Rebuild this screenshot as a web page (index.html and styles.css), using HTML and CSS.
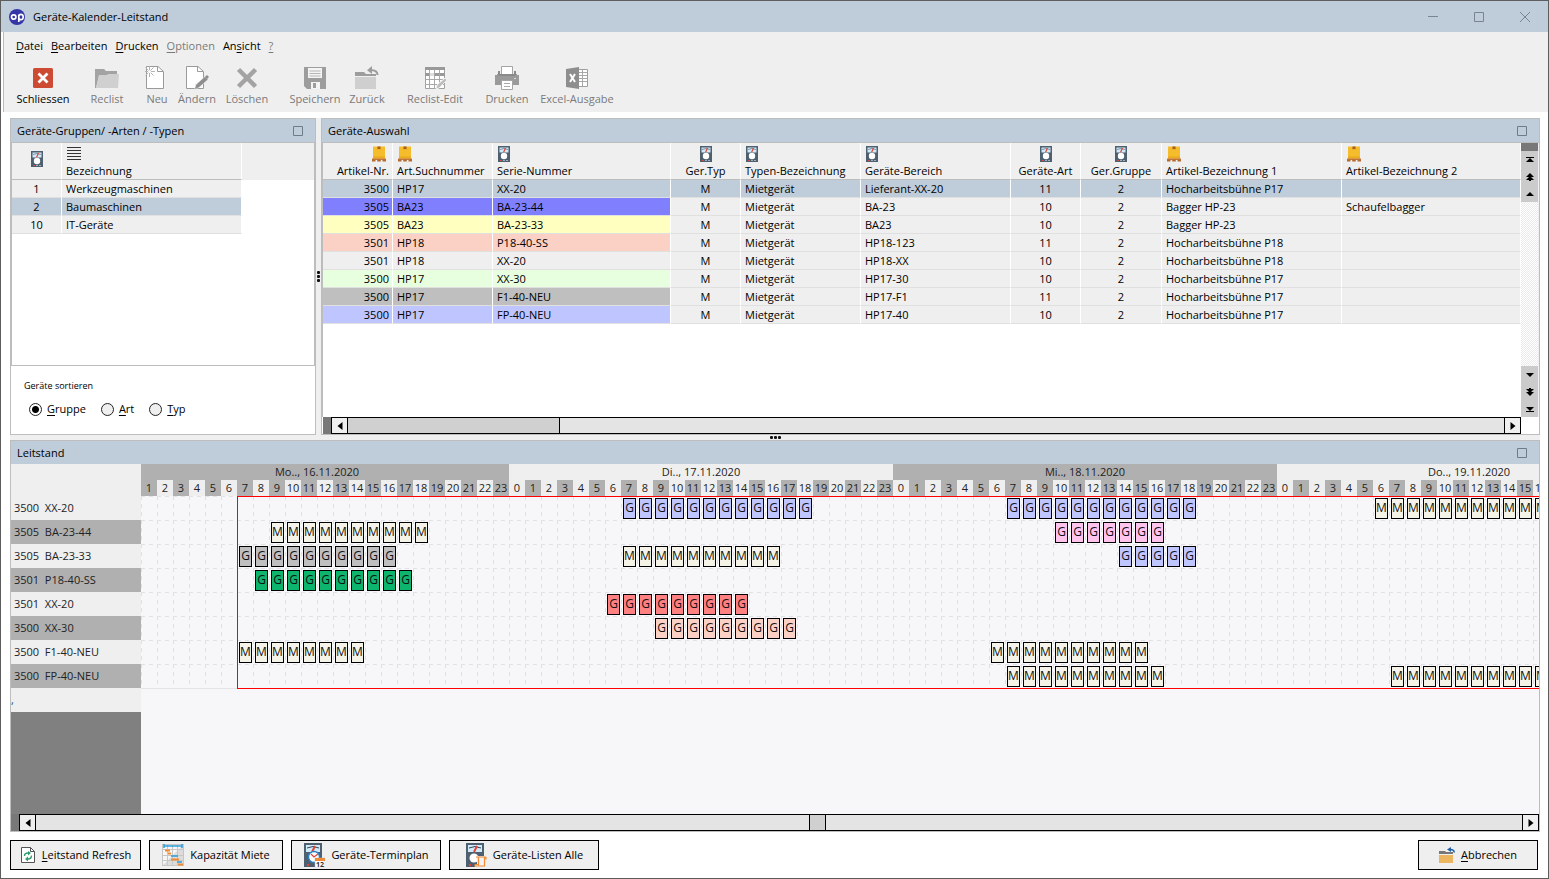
FILE: index.html
```html
<!DOCTYPE html>
<html lang="de">
<head>
<meta charset="utf-8">
<title>Geräte-Kalender-Leitstand</title>
<link rel="stylesheet" href="styles.css">
</head>
<body>
<svg class="defs" aria-hidden="true">
  <symbol id="meter" viewBox="0 0 12 16">
    <path fill="#4e5f70" d="M0 0h12v16H0z"/>
    <path fill="#cfeaf8" d="M1.500 1.500h9v5h-9z"/>
    <path fill="none" stroke="#2b3a49" stroke-width=".5" d="M2 3.500Q6 1.500 10 3.500"/>
    <path stroke="#e04436" stroke-width="1.200" d="M5.500 6.500 7.500 2"/>
    <circle cx="6" cy="10" r="3.200" fill="#fff"/>
    <path fill="#e04436" d="M2 14h2v1H2z"/><path fill="#9fb0be" d="M5 14h2v1H5zM8 14h2v1H8z"/>
  </symbol>
  <symbol id="box" viewBox="0 0 14 15">
    <path fill="#f5bc2c" d="M1 0h12v12H1z"/><path fill="#e9aa1c" d="M1 10h12v2H1z"/>
    <path fill="#a85a1c" d="M5.500 0h3v3l-1.500-.8L5.500 3z"/>
    <path fill="#c97b3a" d="M0 12h14v1.500H0z"/><path fill="#b56a30" d="M0 13h3.500v2H0zM5.200 13h3.600v2H5.200zM10.500 13H14v2h-3.500z"/>
  </symbol>
  <symbol id="max" viewBox="0 0 10 10"><path fill="none" stroke="#6f7c88" d="M.5.5h9v9h-9z"/></symbol>
</svg>

<div class="window">
  <header class="titlebar">
    <svg class="logo" viewBox="0 0 16 16"><circle cx="8" cy="8" r="8" fill="#3535a8"/><circle cx="4.700" cy="8" r="2.200" fill="none" stroke="#fff" stroke-width="1.700"/><path fill="none" stroke="#fff" stroke-width="1.700" d="M9.800 13V5.500M9.800 8a2.200 2.200 0 1 0 4.300 0 2.200 2.200 0 1 0-4.300 0"/></svg>
    <h1>Geräte-Kalender-Leitstand</h1>
    <div class="caption">
      <button aria-label="Minimieren"><svg viewBox="0 0 12 12"><path d="M1 5.500h10"/></svg></button>
      <button aria-label="Maximieren"><svg viewBox="0 0 12 12"><path d="M1.500 1.500h9v9h-9z"/></svg></button>
      <button aria-label="Fenster schliessen"><svg viewBox="0 0 12 12"><path d="m1 1 10 10M11 1 1 11"/></svg></button>
    </div>
  </header>

  <div class="chrome">
    <nav class="menu">
      <button><u>D</u>atei</button><button><u>B</u>earbeiten</button><button><u>D</u>rucken</button><button disabled><u>O</u>ptionen</button><button>An<u>s</u>icht</button><button disabled><u>?</u></button>
    </nav>
    <div class="toolbar">
      <button class="w64"><svg viewBox="0 0 24 24"><rect x="2" y="2" width="20" height="20" rx="1.500" fill="#ce4b33"/><path stroke="#fff" stroke-width="2.800" d="m7.500 7.500 9 9m0-9-9 9"/></svg>Schliessen</button>
      <button class="w64" disabled><svg viewBox="0 0 24 24"><path fill="#a3a3a3" d="M0 3h9l2 2h11v5H4L1 22H0z"/><path fill="#d0d0d0" d="M4 9h8l1-1h11l-1 14H1z"/></svg>Reclist</button>
      <button class="w36" disabled><svg viewBox="3 0 24 24"><path fill="#fff" stroke="#9a9a9a" d="M4.500.5H16l5.500 5v17h-17z"/><path fill="none" stroke="#9a9a9a" d="M15.500.5v5h5.500"/><path stroke="#b3b3b3" d="M7.500 0v11M3 5.500h10M3.500 1.500l8 8m0-8-8 8"/><circle cx="7.500" cy="5.500" r="1.500" fill="#fff"/></svg>Neu</button>
      <button class="w44" disabled><svg viewBox="0 0 24 24"><path fill="#fff" stroke="#9a9a9a" d="M1.500.5H13l5.500 5v17h-17z"/><path fill="none" stroke="#9a9a9a" d="M12.500.5v5h5.500"/><path fill="#8e8e8e" stroke="#efefef" stroke-width=".5" d="m9.500 23.500 1.500-5 9-8 3 3-9 8z"/><path stroke="#8e8e8e" stroke-width="3" d="m21 12 2-2"/></svg>Ändern</button>
      <button class="w56" disabled><svg viewBox="0 0 24 24"><path stroke="#a3a3a3" stroke-width="4.500" d="m3.500 3.500 17 17m0-17-17 17"/></svg>Löschen</button>
      <button class="w60 gap10" disabled><svg viewBox="0 0 24 24"><path fill="#9d9d9d" d="M1 1h22v22H4l-3-3z"/><path fill="#f4f4f4" d="M5 2h14v10H5zM8 16h9v7H8z"/><path stroke="#b5b5b5" d="M6.500 5h11M6.500 7.500h11M6.500 10h11"/><path fill="#9d9d9d" d="M10 17h3v5h-3z"/></svg>Speichern</button>
      <button class="w44" disabled><svg viewBox="0 0 24 24"><path fill="#cfcfcf" d="M0 11h21v12H0z"/><path fill="#9d9d9d" d="M0 10V6h9l2 2h10v2z"/><path fill="none" stroke="#9d9d9d" stroke-width="2" d="M22.500 9q0-5-7-5"/><path fill="#9d9d9d" d="M12 4.200 17 0v8z"/></svg>Zurück</button>
      <button class="w68 gap12" disabled><svg viewBox="0 0 24 24"><path fill="#fff" stroke="#a0a0a0" d="M2.500 1.500h19v21h-19z"/><path fill="#999" d="M2 1h20v3H2zM2 7h20v3H2z"/><path fill="#ddd" d="M6 7h5v3H6z"/><path stroke="#a8a8a8" d="M6.500 4v19M11.500 4v19M16.500 4v19M2 13.500h20M2 18.500h20"/><path fill="#bdbdbd" stroke="#efefef" d="m13 23 1-4 8-7 2 2-8 8z"/></svg>Reclist-Edit</button>
      <button class="w48 gap14" disabled><svg viewBox="0 0 24 24"><path fill="#9a9a9a" d="M0 8h24v11H0z"/><path fill="#efefef" d="M0 7h2v2H0zM22 7h2v2h-2z"/><path fill="#fff" stroke="#a5a5a5" d="M6.500.5h11v8h-11z"/><path fill="#8a8a8a" d="M3 5h2v4H3zM19 5h2v4h-2zM4 8h16v2H4z"/><path fill="#fff" stroke="#a5a5a5" d="M6.500 14.500h11v9h-11z"/><path stroke="#aaa" d="M9 17.500h6M9 20.500h6"/><path fill="#ddd" d="M19 12h2v1h-2z"/></svg>Drucken</button>
      <button class="w84 gap4" disabled><svg viewBox="0 0 24 24"><path fill="#fff" stroke="#a0a0a0" d="M13 3.500h9.500v17H13z"/><path stroke="#a8a8a8" d="M13 6.500h9M13 9.500h9M13 12.500h9M13 15.500h9M17.500 4v16"/><path fill="#8e8e8e" d="m1 3 13-2v22L1 21z"/><path stroke="#fff" stroke-width="2" d="m5 8 5 8m0-8-5 8"/></svg>Excel-Ausgabe</button>
    </div>
  </div>

  <main class="workspace">
    <div class="top">
      <section class="panel groups">
        <h2>Geräte-Gruppen/ -Arten / -Typen<button aria-label="Gruppen maximieren"><svg><use href="#max"/></svg></button></h2>
        <div class="groups-list">
          <table class="grid">
            <colgroup><col class="c50"><col class="c180"><col></colgroup>
            <thead><tr><th class="mid solo"><svg class="meter"><use href="#meter"/></svg></th><th><svg class="lines" viewBox="0 0 14 16"><path stroke="#333" d="M0 1.500h14M0 4.500h14M0 7.500h14M0 10.500h14M0 13.500h14"/></svg>Bezeichnung</th><th class="rest"></th></tr></thead>
            <tbody>
              <tr><td class="mid">1</td><td>Werkzeugmaschinen</td></tr>
              <tr class="sel"><td class="mid">2</td><td>Baumaschinen</td></tr>
              <tr><td class="mid">10</td><td>IT-Geräte</td></tr>
            </tbody>
          </table>
        </div>
        <fieldset class="sort">
          <legend>Geräte sortieren</legend>
          <div class="options">
            <label><input type="radio" name="sort" checked><span><u>G</u>ruppe</span></label>
            <label><input type="radio" name="sort"><span><u>A</u>rt</span></label>
            <label><input type="radio" name="sort"><span><u>T</u>yp</span></label>
          </div>
        </fieldset>
      </section>

      <div class="splitter vertical"><i></i><i></i><i></i></div>

      <section class="panel devices">
        <h2>Geräte-Auswahl<button aria-label="Auswahl maximieren"><svg><use href="#max"/></svg></button></h2>
        <div class="devices-body">
          <div class="devices-list">
            <table class="grid">
              <colgroup><col class="c70"><col class="c100"><col class="c178"><col class="c70"><col class="c120"><col class="c150"><col class="c70"><col class="c81"><col class="c180"><col></colgroup>
              <thead><tr>
                <th class="num"><svg class="box"><use href="#box"/></svg>Artikel-Nr.</th>
                <th><svg class="box"><use href="#box"/></svg>Art.Suchnummer</th>
                <th><svg class="meter"><use href="#meter"/></svg>Serie-Nummer</th>
                <th class="mid"><svg class="meter"><use href="#meter"/></svg>Ger.Typ</th>
                <th><svg class="meter"><use href="#meter"/></svg>Typen-Bezeichnung</th>
                <th><svg class="meter"><use href="#meter"/></svg>Geräte-Bereich</th>
                <th class="mid"><svg class="meter"><use href="#meter"/></svg>Geräte-Art</th>
                <th class="mid"><svg class="meter"><use href="#meter"/></svg>Ger.Gruppe</th>
                <th><svg class="box"><use href="#box"/></svg>Artikel-Bezeichnung 1</th>
                <th><svg class="box"><use href="#box"/></svg>Artikel-Bezeichnung 2</th>
              </tr></thead>
              <tbody id="devices"></tbody>
            </table>
          </div>
          <div class="vscroll">
            <div class="vgroup">
              <button aria-label="Anfang"><svg viewBox="0 0 8 8"><path d="M0 1h8v1H0zM4 2l4 4H0z"/></svg></button>
              <button aria-label="Seite hoch"><svg viewBox="0 0 8 8"><path d="m4 0 4 4H0zM4 3l4 4H0zM3 7h2v1H3z"/></svg></button>
              <button aria-label="Hoch"><svg viewBox="0 0 8 8"><path d="m4 2 4 4H0z"/></svg></button>
            </div>
            <div class="vtrack"></div>
            <div class="vgroup down">
              <button aria-label="Runter"><svg viewBox="0 0 8 8"><path d="m4 6 4-4H0z"/></svg></button>
              <button aria-label="Seite runter"><svg viewBox="0 0 8 8"><path d="m4 8 4-4H0zM4 5l4-4H0zM3 0h2v1H3z"/></svg></button>
              <button aria-label="Ende"><svg viewBox="0 0 8 8"><path d="M0 6h8v1H0zM4 6l4-4H0z"/></svg></button>
            </div>
          </div>
        </div>
        <div class="hscroll devices-scroll">
          <button aria-label="Links"><svg viewBox="0 0 5 8"><path d="M5 0v8L0 4z"/></svg></button>
          <div class="htrack"><div class="thumb long"></div></div>
          <button aria-label="Rechts"><svg viewBox="0 0 5 8"><path d="M0 0v8l5-4z"/></svg></button>
        </div>
      </section>
    </div>

    <div class="splitter horizontal"><i></i><i></i><i></i></div>

    <section class="panel plan">
      <h2>Leitstand<button aria-label="Leitstand maximieren"><svg><use href="#max"/></svg></button></h2>
      <div class="plan-body">
        <div class="names" id="names"></div>
        <div class="timeline">
          <div class="days" id="days"></div>
          <div class="hours" id="hours"></div>
          <div class="rows" id="rows"><div class="range"></div></div>
        </div>
      </div>
      <div class="hscroll">
        <button aria-label="Früher"><svg viewBox="0 0 5 8"><path d="M5 0v8L0 4z"/></svg></button>
        <div class="htrack"><div class="thumb short"></div></div>
        <button aria-label="Später"><svg viewBox="0 0 5 8"><path d="M0 0v8l5-4z"/></svg></button>
      </div>
    </section>
  </main>

  <footer class="actions">
    <button class="b131"><svg class="i16" viewBox="0 0 14 16"><path fill="#fff" stroke="#555" d="M.5.5h9l4 4v11H.5z"/><path fill="none" stroke="#555" d="M9.500.5v4h4"/><path fill="none" stroke="#2f9e6e" stroke-width="1.400" d="M3.500 9q0-3 3.500-3M10.500 8.500q0 3.500-3.500 3.500"/><path fill="#2f9e6e" d="M7 4l3 2-3 2.500zM7 9.500 4 12l3 2.500z"/></svg><span><u>L</u>eitstand Refresh</span></button>
    <button class="b134"><svg class="i22" viewBox="0 0 22 22"><path fill="#f6f6f6" d="M0 0h22v22H0z"/><path fill="#dcdcdc" d="M22 0v22H0z"/><path stroke="#c6c6c6" d="M.5 0v22M5.500 0v22M10.500 0v22M15.500 0v22M21.500 0v22M0 .5h22M0 5.500h22M0 11.500h22M0 16.500h22M0 21.500h22"/><path stroke="#2b9fd8" stroke-width="1.500" d="M2 2h18M2 0v4M20 0v4M9 12h7M15 18h5"/><path stroke="#f08a35" stroke-width="2" d="M3 6.500h5M6 9.500h3M9 15.500h8M16 20.500h5"/></svg>Kapazität Miete</button>
    <button class="b150"><svg class="i22 tall" viewBox="0 0 22 25"><path fill="#4e5f70" d="M1 0h18v24H1z"/><path fill="#cfeaf8" d="M3 2h14v7H3z"/><path fill="none" stroke="#345" d="M4 5q6-3 12 0"/><path stroke="#e04436" stroke-width="2" d="m9 9 3-6"/><circle cx="11" cy="14" r="5.500" fill="#fff" stroke="#2b7fc4" stroke-width="1.400"/><path fill="none" stroke="#e04436" stroke-width="1.200" d="m8 11 3 3 4-3"/><path fill="#fff" stroke="#bbb" stroke-width=".5" d="M12 15h10v10H12z"/><path fill="#f08a35" d="M12 15h10v3H12z"/><path fill="#e04436" d="M4 21h2v2H4z"/><text x="13" y="24" font-size="7" font-weight="700" fill="#333">12</text></svg>Geräte-Terminplan</button>
    <button class="b150"><svg class="i22 tall" viewBox="0 0 22 25"><path fill="#4e5f70" d="M1 0h18v24H1z"/><path fill="#cfeaf8" d="M3 2h14v7H3z"/><path fill="none" stroke="#345" d="M4 5q6-3 12 0"/><path stroke="#e04436" stroke-width="2" d="m9 9 3-6"/><circle cx="9" cy="15" r="4.500" fill="#fff"/><path fill="#e04436" d="M4 21h2v2H4z"/><path fill="#efefef" d="M12 13h10v12H10v-3h2z"/><path fill="#f3f3f3" stroke="#f08a35" stroke-width="1.200" d="M13.500 14h6v9h-6zM11 14h10M19.500 16H21v-2M10 21.500V23h9.500M10 21.500h3.500"/></svg>Geräte-Listen Alle</button>
    <button class="b120"><svg class="i16" viewBox="0 0 16 16"><path fill="#ecb560" d="M0 8h14v8H0z"/><path fill="#777" d="M0 7V4h6l1 1h7v2z"/><path fill="none" stroke="#1d5fa8" stroke-width="1.500" d="M15.200 5.500q0-3-4-3"/><path fill="#1d5fa8" d="m8 2.500 4-2.500v5z"/></svg><span><u>A</u>bbrechen</span></button>
  </footer>
</div>
<script src="app.js"></script>
</body>
</html>
```
FILE: styles.css
```css
* { box-sizing: border-box; }
body { margin: 0; background: #fff; color: #000; font: 11px/16px "Open Sans", "Noto Sans", sans-serif; }
button { font: inherit; color: inherit; background: none; border: 0; padding: 0; white-space: nowrap; }
h1, h2 { margin: 0; font-size: 11px; font-weight: 400; }
svg { display: block; fill: none; }
u { text-underline-offset: 2px; }
.defs { position: absolute; width: 0; height: 0; }

.window { display: flex; flex-direction: column; height: 100vh; min-height: 640px; border: 1px solid #5d5d5d; overflow: hidden; }
.titlebar { display: flex; align-items: center; flex: none; height: 31px; padding: 0 0 0 8px; background: #bfccda; }
.logo { width: 16px; height: 16px; margin-right: 8px; }
.caption { display: flex; margin-left: auto; }
.caption button { width: 46px; height: 30px; display: grid; place-items: center; }
.caption svg { width: 12px; height: 12px; stroke: #7b858f; }

.chrome { flex: none; background: #efefef; height: 80px; margin-left: 2px; padding: 6px 7px 0; border-left: 1px solid #bbb; }
.menu { display: flex; gap: 8px; padding-left: 5px; }
.menu button { height: 16px; }
button:disabled { color: #7a7a7a; }
.toolbar { display: flex; padding-top: 12px; }
.toolbar button { display: flex; flex-direction: column; align-items: center; gap: 1px; flex: none; }
.toolbar svg { width: 24px; height: 24px; }
.w36 { width: 36px; } .w44 { width: 44px; } .w48 { width: 48px; } .w56 { width: 56px; } .w60 { width: 60px; }
.w64 { width: 64px; } .w68 { width: 68px; } .w84 { width: 84px; }
.gap4 { margin-left: 4px; } .gap10 { margin-left: 10px; } .gap12 { margin-left: 12px; } .gap14 { margin-left: 14px; }

.workspace { flex: 1; min-height: 0; display: flex; flex-direction: column; margin: 6px 8px 0 9px; background: #efefef; }
.top { flex: 317 1 0; min-height: 0; display: grid; grid-template-columns: 306px 5px minmax(0, 1fr); }
.panel { display: flex; flex-direction: column; min-width: 0; min-height: 0; border: 1px solid #bdbdbd; background: #fff; }
.panel h2 { display: flex; align-items: center; flex: none; height: 23px; padding: 0 12px 0 6px; background: #bfccda; }
.panel h2 button { margin-left: auto; }
.panel h2 svg { width: 10px; height: 10px; }
.plan { flex: 390 1 0; }
.splitter { display: flex; align-items: center; justify-content: center; gap: 1px; }
.splitter i { width: 3px; height: 3px; border-radius: 1px; background: #111; }
.vertical { flex-direction: column; }
.horizontal { flex: none; height: 5px; }

.groups-list { flex: 1; min-height: 0; overflow: hidden; border: 1px solid #bdbdbd; }
.grid { width: 100%; table-layout: fixed; border-collapse: separate; border-spacing: 0; }
.grid th { height: 37px; padding: 3px 4px 0; background: #efefef; border-right: 1px solid #fff; border-bottom: 1px solid #bdbdbd; font-weight: 400; text-align: left; vertical-align: top; white-space: nowrap; }
.grid th svg { margin: 0 0 1px 1px; }
.grid th.mid, .grid td.mid { text-align: center; }
.grid th.mid svg { margin-left: auto; margin-right: auto; }
.grid th.num, .grid td.num { text-align: right; padding-right: 3px; }
.grid th.num svg { margin-left: auto; margin-right: 3px; }
.grid th.solo { padding-top: 8px; }
.grid th.rest { border: 0; }
.grid td { height: 18px; padding: 0 4px; background: #efefef; border-right: 1px solid #fff; border-bottom: 1px solid #e0e0e0; line-height: 16px; white-space: nowrap; }
.grid .sel td { background: #bfccda; }
.meter { width: 12px; height: 16px; }
.box { width: 14px; height: 16px; }
.lines { width: 14px; height: 16px; }
.c50 { width: 50px; } .c70 { width: 70px; } .c81 { width: 81px; } .c100 { width: 100px; } .c120 { width: 120px; }
.c150 { width: 150px; } .c178 { width: 178px; } .c180 { width: 180px; }
.grid .violet { background: #8080ff; } .grid .yellow { background: #ffffc0; } .grid .salmon { background: #fbd1c6; }
.grid .green { background: #e8ffdf; } .grid .grey { background: #bfbfbf; } .grid .blue { background: #bfc6ff; }

.sort { flex: none; height: 68px; margin: 0; padding: 0 13px; border: 0; }
.sort legend { padding: 12px 0 0; font-size: 9px; }
.options { display: flex; gap: 15px; padding: 7px 0 0 5px; }
.options label { display: flex; align-items: center; gap: 5px; height: 16px; }
.options input { appearance: none; width: 13px; height: 13px; margin: 0; border: 1px solid #222; border-radius: 50%; background: #efefef; }
.options input:checked { background: radial-gradient(circle, #000 0 3px, #fff 4px); }

.devices-body { flex: 1; min-height: 0; display: flex; border: solid #bdbdbd; border-width: 1px 0 0 1px; }
.devices-list { flex: 1; min-width: 0; overflow: hidden; }
.vscroll { display: flex; flex-direction: column; width: 18px; border-right: 1px solid #efefef; }
.vgroup { display: flex; flex-direction: column; justify-content: space-around; height: 59px; flex: none; background: #cbcbcb; border-top: 8px solid #787878; }
.vgroup.down { height: 51px; border: 0; }
.vgroup button { display: grid; place-items: center; }
.vgroup svg, .hscroll svg { width: 8px; height: 8px; fill: #000; }
.vtrack { flex: 1; background: repeating-conic-gradient(#fff 0 25%, #eaeaea 0 50%) 0 0 / 2px 2px; }

.hscroll { display: flex; flex: none; height: 17px; padding-left: 8px; background: #787878; }
.hscroll button { width: 17px; border: 1px solid #000; background: #efefef; display: grid; place-items: center; }
.devices-scroll { margin: 0 18px 0 1px; }
.htrack { flex: 1; background: #e4e4e4; border: solid #000; border-width: 1px 0; }
.thumb { height: 100%; background: #d0d0d0; border-right: 1px solid #000; }
.long { width: 212px; }
.short { width: 17px; margin-left: 52%; border-left: 1px solid #000; }

.plan-body { flex: 1; min-height: 0; display: flex; background: #f7f7f9; overflow: hidden; }
.names { width: 130px; flex: none; padding-top: 32px; background: linear-gradient(#efefef 32px, #808080 32px); color: #222; }
.names div { height: 24px; padding: 0 3px; line-height: 24px; background: #efefef; white-space: pre; }
.names div:nth-child(even) { background: #b0b0b0; }
.names .marker { padding: 0; color: #14507e; }
.timeline { flex: 1; min-width: 0; overflow: hidden; }
.days, .hours, .rows { width: 1520px; color: #222; }
.days { display: grid; grid-template-columns: 368px repeat(3, 384px); background: #efefef; text-align: center; }
.days div { height: 16px; }
.days div:first-child { padding-right: 16px; }
.days div:nth-child(odd) { background: #b0b0b0; }
.hours, .row { display: grid; grid-template-columns: repeat(95, 16px); }
.hours div { height: 16px; display: flex; justify-content: center; background: #efefef; }
.hours .dark { background: #b0b0b0; }
.rows { position: relative; border-bottom: 1px solid #e4e4e6; }
.row { height: 24px; padding-top: 2px; background:
  repeating-linear-gradient(90deg, transparent 0 4px, #f7f7f9 4px 8px) 0 0 / 100% 1px no-repeat,
  linear-gradient(#e2e2e5, #e2e2e5) 0 0 / 100% 1px no-repeat,
  repeating-linear-gradient(#f7f7f900 0 4px, #f7f7f9 4px 8px),
  repeating-linear-gradient(90deg, #e2e2e5 0 1px, #f7f7f9 1px 16px); }
.range { position: absolute; inset: 0 0 -1px 96px; border: 1px solid #f00; border-right: 0; }
.chip { position: relative; width: 13px; height: 21px; margin-left: 2px; display: flex; justify-content: center; border: 1px solid #000; font-size: 12px; line-height: 18px; color: #111; }
.m { background: #f5f3e8; } .lilac { background: #bfc6ff; } .pink { background: #ffc3ee; } .silver { background: #bfbfbf; }
.emerald { background: #0db46c; } .red { background: #ff8080; } .peach { background: #fbd1c6; }

.actions { flex: none; display: flex; gap: 8px; padding: 8px 10px 8px 9px; }
.actions button { display: flex; align-items: center; justify-content: center; gap: 6px; height: 30px; background: #efefef; border: 1px solid #000; }
.actions .b120 { width: 120px; margin-left: auto; }
.b131 { width: 131px; } .b134 { width: 134px; } .b150 { width: 150px; }
.i16 { width: 16px; height: 16px; } .i22 { width: 22px; height: 22px; } .tall { height: 25px; }
```
FILE: app.js
```js
const devices = [
  ["3500", "HP17", "XX-20", "Lieferant-XX-20", "11", "Hocharbeitsbühne P17", "", ""],
  ["3505", "BA23", "BA-23-44", "BA-23", "10", "Bagger HP-23", "Schaufelbagger", "violet"],
  ["3505", "BA23", "BA-23-33", "BA23", "10", "Bagger HP-23", "", "yellow"],
  ["3501", "HP18", "P18-40-SS", "HP18-123", "11", "Hocharbeitsbühne P18", "", "salmon"],
  ["3501", "HP18", "XX-20", "HP18-XX", "10", "Hocharbeitsbühne P18", "", ""],
  ["3500", "HP17", "XX-30", "HP17-30", "10", "Hocharbeitsbühne P17", "", "green"],
  ["3500", "HP17", "F1-40-NEU", "HP17-F1", "11", "Hocharbeitsbühne P17", "", "grey"],
  ["3500", "HP17", "FP-40-NEU", "HP17-40", "10", "Hocharbeitsbühne P17", "", "blue"],
];

// Bookings per device: [day, first hour, last hour, letter, colour]
const bookings = [
  [[1, 7, 18, "G", "lilac"], [2, 7, 18, "G", "lilac"], [3, 6, 16, "M", "m"]],
  [[0, 9, 18, "M", "m"], [2, 10, 16, "G", "pink"]],
  [[0, 7, 16, "G", "silver"], [1, 7, 16, "M", "m"], [2, 14, 18, "G", "lilac"]],
  [[0, 8, 17, "G", "emerald"]],
  [[1, 6, 14, "G", "red"]],
  [[1, 9, 17, "G", "peach"]],
  [[0, 7, 14, "M", "m"], [2, 6, 15, "M", "m"]],
  [[2, 7, 16, "M", "m"], [3, 7, 16, "M", "m"]],
];

function add(parent, tag, text, className) {
  const node = document.createElement(tag);
  node.textContent = text;
  if (className) node.className = className;
  parent.append(node);
  return node;
}

const byId = (id) => document.getElementById(id);

devices.forEach(([nr, search, serial, area, kind, name1, name2, colour], i) => {
  const tr = add(byId("devices"), "tr", "", i === 0 ? "sel" : "");
  add(tr, "td", nr, "num " + colour);
  add(tr, "td", search, colour);
  add(tr, "td", serial, colour);
  add(tr, "td", "M", "mid");
  add(tr, "td", "Mietgerät");
  add(tr, "td", area);
  add(tr, "td", kind, "mid");
  add(tr, "td", "2", "mid");
  add(tr, "td", name1);
  add(tr, "td", name2);

  add(byId("names"), "div", nr + "  " + serial);
  const row = add(byId("rows"), "div", "", "row");
  for (const [day, from, to, letter, tone] of bookings[i]) {
    for (let h = from; h <= to; h++) {
      add(row, "div", letter, "chip " + tone).style.gridColumn = day * 24 + h;
    }
  }
});
add(byId("names"), "div", ",", "marker");

// The first day starts at 1 o'clock; column 1 of the timeline is that hour
["Mo.., 16.11.2020", "Di.., 17.11.2020", "Mi.., 18.11.2020", "Do.., 19.11.2020"].forEach((d, day) => {
  add(byId("days"), "div", d);
  for (let h = day === 0 ? 1 : 0; h < 24; h++) {
    if (day < 3 || h <= 16) add(byId("hours"), "div", h, h % 2 ? "dark" : "");
  }
});
```
